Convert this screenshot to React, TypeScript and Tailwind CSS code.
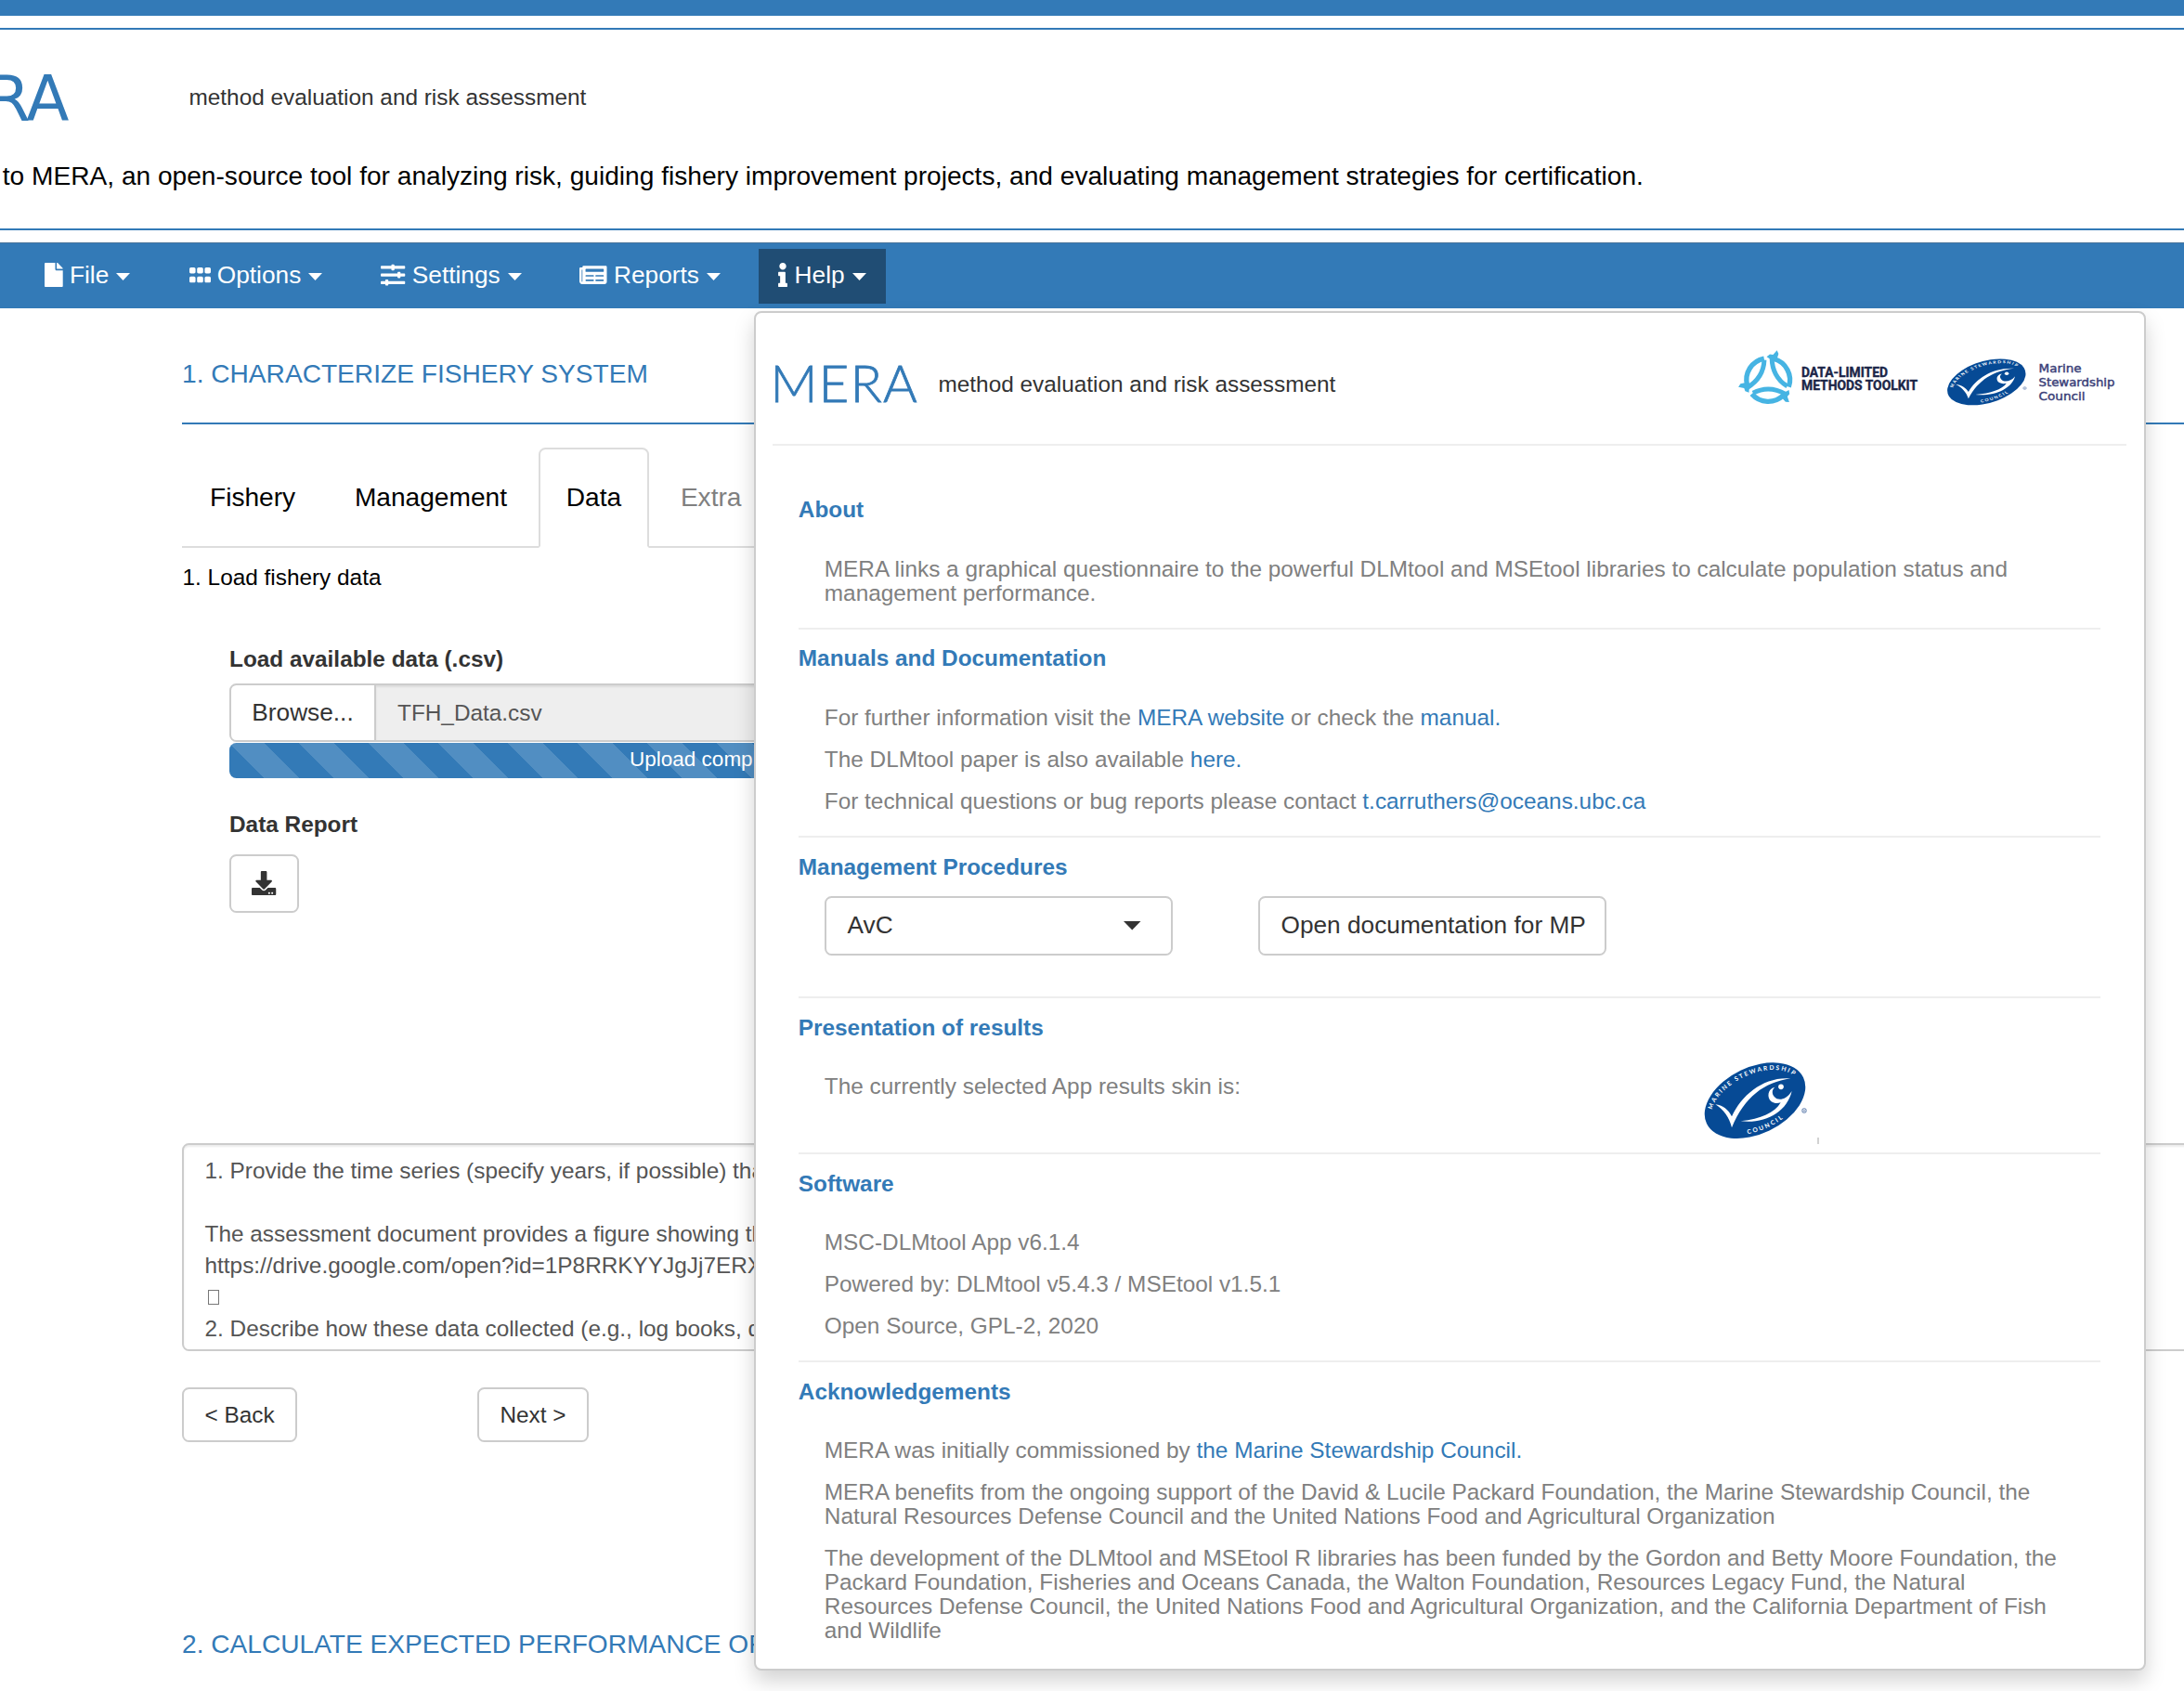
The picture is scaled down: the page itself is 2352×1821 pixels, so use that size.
import React from "react";
import {
  FaDownload,
  FaFile,
  FaGripHorizontal,
  FaInfo,
  FaNewspaper,
  FaSlidersH,
} from "react-icons/fa";

function Caret({ className = "w-[15px] h-[8px]" }: { className?: string }) {
  return (
    <svg className={className} viewBox="0 0 16 8" preserveAspectRatio="none" fill="currentColor">
      <path d="M0 0H16L8 8Z" />
    </svg>
  );
}

type NavItemProps = {
  icon: React.ReactNode;
  label: string;
  cell: string;
  active?: boolean;
};

function NavItem({ icon, label, cell, active }: NavItemProps) {
  return (
    <div className={`flex shrink-0 ${cell}`}>
      <button
        className={`flex h-[59px] items-center px-[21.5px] text-[26.25px] leading-[36px] ${
          active ? "bg-[#204d74]" : ""
        }`}
      >
        <span className="mt-[-2px] mr-[7.3px]">{icon}</span>
        <span className="mt-[-2px]">{label}</span>
        <Caret className="mt-[2px] ml-[8px] h-[8px] w-[15px]" />
      </button>
    </div>
  );
}

function MscMark({ className }: { className: string }) {
  return (
    <svg className={className} viewBox="100 95 345 260" preserveAspectRatio="none">
      <g transform="translate(271 224.5) rotate(-25.6)">
        <ellipse rx="173" ry="107.6" fill="#064a95" />
        <path id="msc-top" d="M-138 -33A152 87 0 0 1 151 -8" fill="none" />
        <path id="msc-bottom" d="M-68 87A165 97 0 0 0 80 85" fill="none" />
        <g fill="#fff" fontFamily="Lato, 'Liberation Sans', sans-serif" fontWeight="700" fontSize="20">
          <text letterSpacing="5.6">
            <textPath href="#msc-top">MARINE STEWARDSHIP</textPath>
          </text>
          <text letterSpacing="6">
            <textPath href="#msc-bottom">COUNCIL</textPath>
          </text>
        </g>
      </g>
      <g fill="#fff">
        <path d="M143 237C166 239 186 255 196 276C228 205 300 146 386 153C300 166 238 212 196 312C188 280 170 253 143 237Z" />
        <path d="M225 291C305 300 374 262 390 194C372 222 346 227 334 213C325 202 325 191 335 181C312 185 308 215 324 228C334 235 345 234 354 231C335 264 290 284 225 291Z" />
        <circle cx="355" cy="180" r="8.5" />
      </g>
      <circle cx="430" cy="257" r="6.5" fill="none" stroke="#6c88b4" strokeWidth="3" />
      <circle cx="430" cy="257" r="2.6" fill="#6c88b4" />
    </svg>
  );
}

function ToolkitFish({ angle }: { angle: number }) {
  return (
    <g transform={`rotate(${angle})`}>
      <path d="M-53 46A70 70 0 0 0 49 50" fill="none" stroke="#46b4e3" strokeWidth="16" />
      <path d="M-49 43Q2 16 56 46" fill="none" stroke="#46b4e3" strokeWidth="15" />
      <path d="M46 44L67 33L69 46L62 54L68 72L56 71L44 58Z" fill="#46b4e3" />
    </g>
  );
}

function ToolkitLogo() {
  return (
    <svg className="h-[74px] w-[200px] overflow-visible" viewBox="1870 376 200 74">
      <g transform="translate(1903.2 409) scale(0.3333)">
        <ToolkitFish angle={0} />
        <ToolkitFish angle={120} />
        <ToolkitFish angle={240} />
      </g>
      <g
        fill="#1b2547"
        stroke="#1b2547"
        strokeWidth="0.4"
        fontFamily="Roboto, 'Liberation Sans', sans-serif"
        fontWeight="700"
        fontSize="15.4"
      >
        <text x="1939" y="405.8" textLength="93" lengthAdjust="spacingAndGlyphs">
          DATA-LIMITED
        </text>
        <text x="1939" y="419.8" textLength="125" lengthAdjust="spacingAndGlyphs">
          METHODS TOOLKIT
        </text>
      </g>
    </svg>
  );
}

function MscName() {
  return (
    <svg className="h-[74px] w-[100px] overflow-visible" viewBox="2190 376 100 74">
      <g
        fill="#3a4078"
        stroke="#3a4078"
        strokeWidth="0.4"
        fontFamily="'DejaVu Sans', sans-serif"
        fontSize="11.6"
      >
        <text x="2194.5" y="400.5" textLength="46" lengthAdjust="spacingAndGlyphs">
          Marine
        </text>
        <text x="2194.5" y="415.5" textLength="82" lengthAdjust="spacingAndGlyphs">
          Stewardship
        </text>
        <text x="2194.5" y="430.5" textLength="50" lengthAdjust="spacingAndGlyphs">
          Council
        </text>
      </g>
    </svg>
  );
}

type SectionProps = {
  title: string;
  height: string;
  first?: boolean;
  children: React.ReactNode;
};

function Section({ title, height, first, children }: SectionProps) {
  return (
    <section className={`${height} ${first ? "" : "border-t-2 border-[#eee] pt-[18.8px]"}`}>
      <h5 className="font-bold text-[#337ab7]">{title}</h5>
      {children}
    </section>
  );
}

function Body({ children }: { children: React.ReactNode }) {
  return (
    <div className="mt-[37px] flex flex-col gap-[18.75px] pl-[28px] whitespace-nowrap text-[#808080]">
      {children}
    </div>
  );
}

function Link({ children }: { children: React.ReactNode }) {
  return <a className="text-[#337ab7]">{children}</a>;
}

function HelpPanel() {
  return (
    <div className="absolute top-[335px] left-[812px] h-[1464px] w-[1499px] rounded-[8px] border-2 border-[#ccc] bg-white px-[18px] pt-[11px] text-[24.375px] leading-[26.25px] shadow-[0_11px_22.5px_rgba(0,0,0,0.175)]">
      <div className="mr-px flex h-[132px] items-center border-b-2 border-[#eee]">
        <div className="ml-[-2.5px] w-[181px] text-[56px] leading-[60px] font-light tracking-[1.4px] text-[#337ab7] [-webkit-text-stroke:0.8px_#337ab7]">
          <span className="font-['Lato']">MERA</span>
        </div>
        <div className="mt-[2px] text-[#333]">method evaluation and risk assessment</div>
        <div className="mr-[-1px] ml-auto flex items-center">
          <ToolkitLogo />
          <MscMark className="mt-[-4px] ml-[24px] h-[53px] w-[89.4px]" />
          <div className="ml-[6.5px]">
            <MscName />
          </div>
        </div>
      </div>

      <div className="mt-[55.5px] mr-[29px] ml-[27.8px]">
        <Section title="About" height="h-[140.2px]" first>
          <div className="mt-[38px]">
            <Body>
              <p>
                MERA links a graphical questionnaire to the powerful DLMtool and MSEtool libraries to calculate population status and
                <br />
                management performance.
              </p>
            </Body>
          </div>
        </Section>

        <Section title="Manuals and Documentation" height="h-[224.2px]">
          <Body>
            <p>
              For further information visit the <Link>MERA website</Link> or check the <Link>manual.</Link>
            </p>
            <p>
              The DLMtool paper is also available <Link>here.</Link>
            </p>
            <p>
              For technical questions or bug reports please contact <Link>t.carruthers@oceans.ubc.ca</Link>
            </p>
          </Body>
        </Section>

        <Section title="Management Procedures" height="h-[173px]">
          <div className="mt-[18.2px] flex gap-[92px] pl-[28.2px] text-[26.25px] text-[#333]">
            <button className="flex h-[63.5px] w-[375px] items-center justify-between rounded-[7.5px] border-2 border-[#ccc] pr-[32px] pl-[22.5px]">
              <span className="mt-[-2px]">AvC</span>
              <Caret className="h-[9.5px] w-[18.5px]" />
            </button>
            <button className="flex h-[63.5px] w-[375px] items-center rounded-[7.5px] border-2 border-[#ccc] pl-[22.5px] whitespace-nowrap">
              <span className="mt-[-2px]">Open documentation for MP</span>
            </button>
          </div>
        </Section>

        <Section title="Presentation of results" height="h-[168.2px]">
          <div className="flex">
            <div className="w-[973.5px]">
              <Body>
                <p>The currently selected App results skin is:</p>
              </Body>
            </div>
            <MscMark className="mt-[22px] h-[86.7px] w-[115px]" />
            <div className="mt-[105px] ml-[9px] h-[7px] w-[2px] bg-[#d2d2d2]" />
          </div>
        </Section>

        <Section title="Software" height="h-[223.8px]">
          <Body>
            <p>MSC-DLMtool App v6.1.4</p>
            <p>Powered by: DLMtool v5.4.3 / MSEtool v1.5.1</p>
            <p>Open Source, GPL-2, 2020</p>
          </Body>
        </Section>

        <Section title="Acknowledgements" height="h-[320px]">
          <Body>
            <p>
              MERA was initially commissioned by <Link>the Marine Stewardship Council.</Link>
            </p>
            <p>
              MERA benefits from the ongoing support of the David &amp; Lucile Packard Foundation, the Marine Stewardship Council, the
              <br />
              Natural Resources Defense Council and the United Nations Food and Agricultural Organization
            </p>
            <p className="leading-[26px]">
              The development of the DLMtool and MSEtool R libraries has been funded by the Gordon and Betty Moore Foundation, the
              <br />
              Packard Foundation, Fisheries and Oceans Canada, the Walton Foundation, Resources Legacy Fund, the Natural
              <br />
              Resources Defense Council, the United Nations Food and Agricultural Organization, and the California Department of Fish
              <br />
              and Wildlife
            </p>
          </Body>
        </Section>
      </div>
    </div>
  );
}

function Tab({ label, active, muted }: { label: string; active?: boolean; muted?: boolean }) {
  return (
    <div
      className={`mr-[3.75px] flex items-center rounded-t-[7.5px] border-2 px-[28px] ${
        active ? "mb-[-2px] border-[#ddd] border-b-white bg-white" : "border-transparent pt-[2px]"
      } ${muted ? "text-[#808080]" : "text-black"}`}
    >
      {label}
    </div>
  );
}

export default function App() {
  return (
    <div className="relative h-[1821px] w-[2352px] overflow-hidden bg-white font-['Liberation_Sans',sans-serif] text-[24.375px] leading-[34px] text-[#333]">
      <div className="h-[17px] bg-[#337ab7]" />

      <header className="mt-[13px] h-[218px] border-y-2 border-[#337ab7] pt-[33px] whitespace-nowrap">
        <div className="flex h-[80.6px] items-center">
          <div className="mt-[2.6px] flex w-[73px] shrink-0 justify-end font-['DejaVu_Sans'] text-[67.5px] leading-[80px] tracking-[-1.5px] text-[#337ab7]">
            MERA
          </div>
          <div className="ml-[130.5px]">method evaluation and risk assessment</div>
        </div>
        <p className="mt-[25px] pl-[2.8px] text-[28.125px] leading-[38px] text-black">
          to MERA, an open-source tool for analyzing risk, guiding fishery improvement projects, and evaluating management strategies for
          certification.
        </p>
      </header>

      <nav className="mt-[13px] flex h-[71px] items-center border-t border-[#4b759b] bg-[#337ab7] pl-[26.5px] text-white">
        <NavItem cell="w-[155.5px]" label="File" icon={<FaFile className="w-[19.7px]" />} />
        <NavItem cell="w-[206.8px]" label="Options" icon={<FaGripHorizontal className="w-[23px]" />} />
        <NavItem cell="w-[213.9px]" label="Settings" icon={<FaSlidersH />} />
        <NavItem cell="w-[214.1px]" label="Reports" icon={<FaNewspaper className="w-[29.5px]" />} />
        <NavItem cell="w-[160px]" label="Help" icon={<FaInfo className="w-[10px]" />} active />
      </nav>

      <main className="pl-[196px]">
        <h4 className="mt-[51px] text-[28.125px] leading-[40px] text-[#337ab7]">1. CHARACTERIZE FISHERY SYSTEM</h4>
        <div className="mt-[32px] h-[2px] bg-[#337ab7]" />

        <div className="mt-[25px] flex h-[108px] w-[1082px] border-b-2 border-[#ddd] text-[28.125px]">
          <Tab label="Fishery" />
          <Tab label="Management" />
          <Tab label="Data" active />
          <Tab label="Extra" muted />
        </div>

        <p className="mt-[15.4px] pl-[0.5px] text-black">1. Load fishery data</p>

        <div className="mt-[54.1px] w-[1082px] pl-[51px]">
          <div className="font-bold">Load available data (.csv)</div>
          <div className="mt-[8.5px] flex h-[63px]">
            <button className="w-[158px] rounded-l-[7.5px] border-2 border-[#ccc] text-[26.25px]">Browse...</button>
            <div className="ml-[-2px] flex grow items-center rounded-r-[7.5px] border-2 border-[#ccc] bg-[#eee] pt-px pl-[23px] text-[#555] shadow-[inset_0_2px_2px_rgba(0,0,0,0.075)]">
              TFH_Data.csv
            </div>
          </div>
          <div className="mt-px h-[38px] rounded-[7.5px] bg-[#337ab7] bg-[linear-gradient(45deg,rgba(255,255,255,0.15)_25%,transparent_25%,transparent_50%,rgba(255,255,255,0.15)_50%,rgba(255,255,255,0.15)_75%,transparent_75%,transparent)] bg-[size:75px_75px] text-center text-[22.5px] leading-[36px] text-white">
            Upload complete
          </div>
          <div className="mt-[33.5px] font-bold">Data Report</div>
          <button className="mt-[14.9px] flex h-[62.6px] w-[75px] items-center justify-center rounded-[7.5px] border-2 border-[#ccc] pb-px text-[26.25px]">
            <FaDownload />
          </button>
        </div>

        <div className="mt-[248px] h-[224px] w-[2200px] rounded-[7.5px] border-2 border-[#ccc] px-[22.5px] pt-[11px] whitespace-nowrap text-[#555] shadow-[inset_0_2px_2px_rgba(0,0,0,0.075)]">
          <p>1. Provide the time series (specify years, if possible) that</p>
          <p className="mt-[34px]">The assessment document provides a figure showing the</p>
          <p>https://drive.google.com/open?id=1P8RRKYYJgJj7ERX</p>
          <div className="flex h-[34px] items-center pl-[3px]">
            <span className="h-[16px] w-[12px] border border-[#777]" />
          </div>
          <p>2. Describe how these data collected (e.g., log books, dealer</p>
        </div>

        <div className="mt-[39px] flex h-[59.5px] gap-[194px]">
          <button className="w-[124px] rounded-[7.5px] border-2 border-[#ccc]">&lt; Back</button>
          <button className="w-[120px] rounded-[7.5px] border-2 border-[#ccc]">Next &gt;</button>
        </div>

        <h4 className="mt-[197.5px] text-[28.125px] leading-[40px] whitespace-nowrap text-[#337ab7]">
          2. CALCULATE EXPECTED PERFORMANCE OF
        </h4>
      </main>

      <HelpPanel />
    </div>
  );
}
